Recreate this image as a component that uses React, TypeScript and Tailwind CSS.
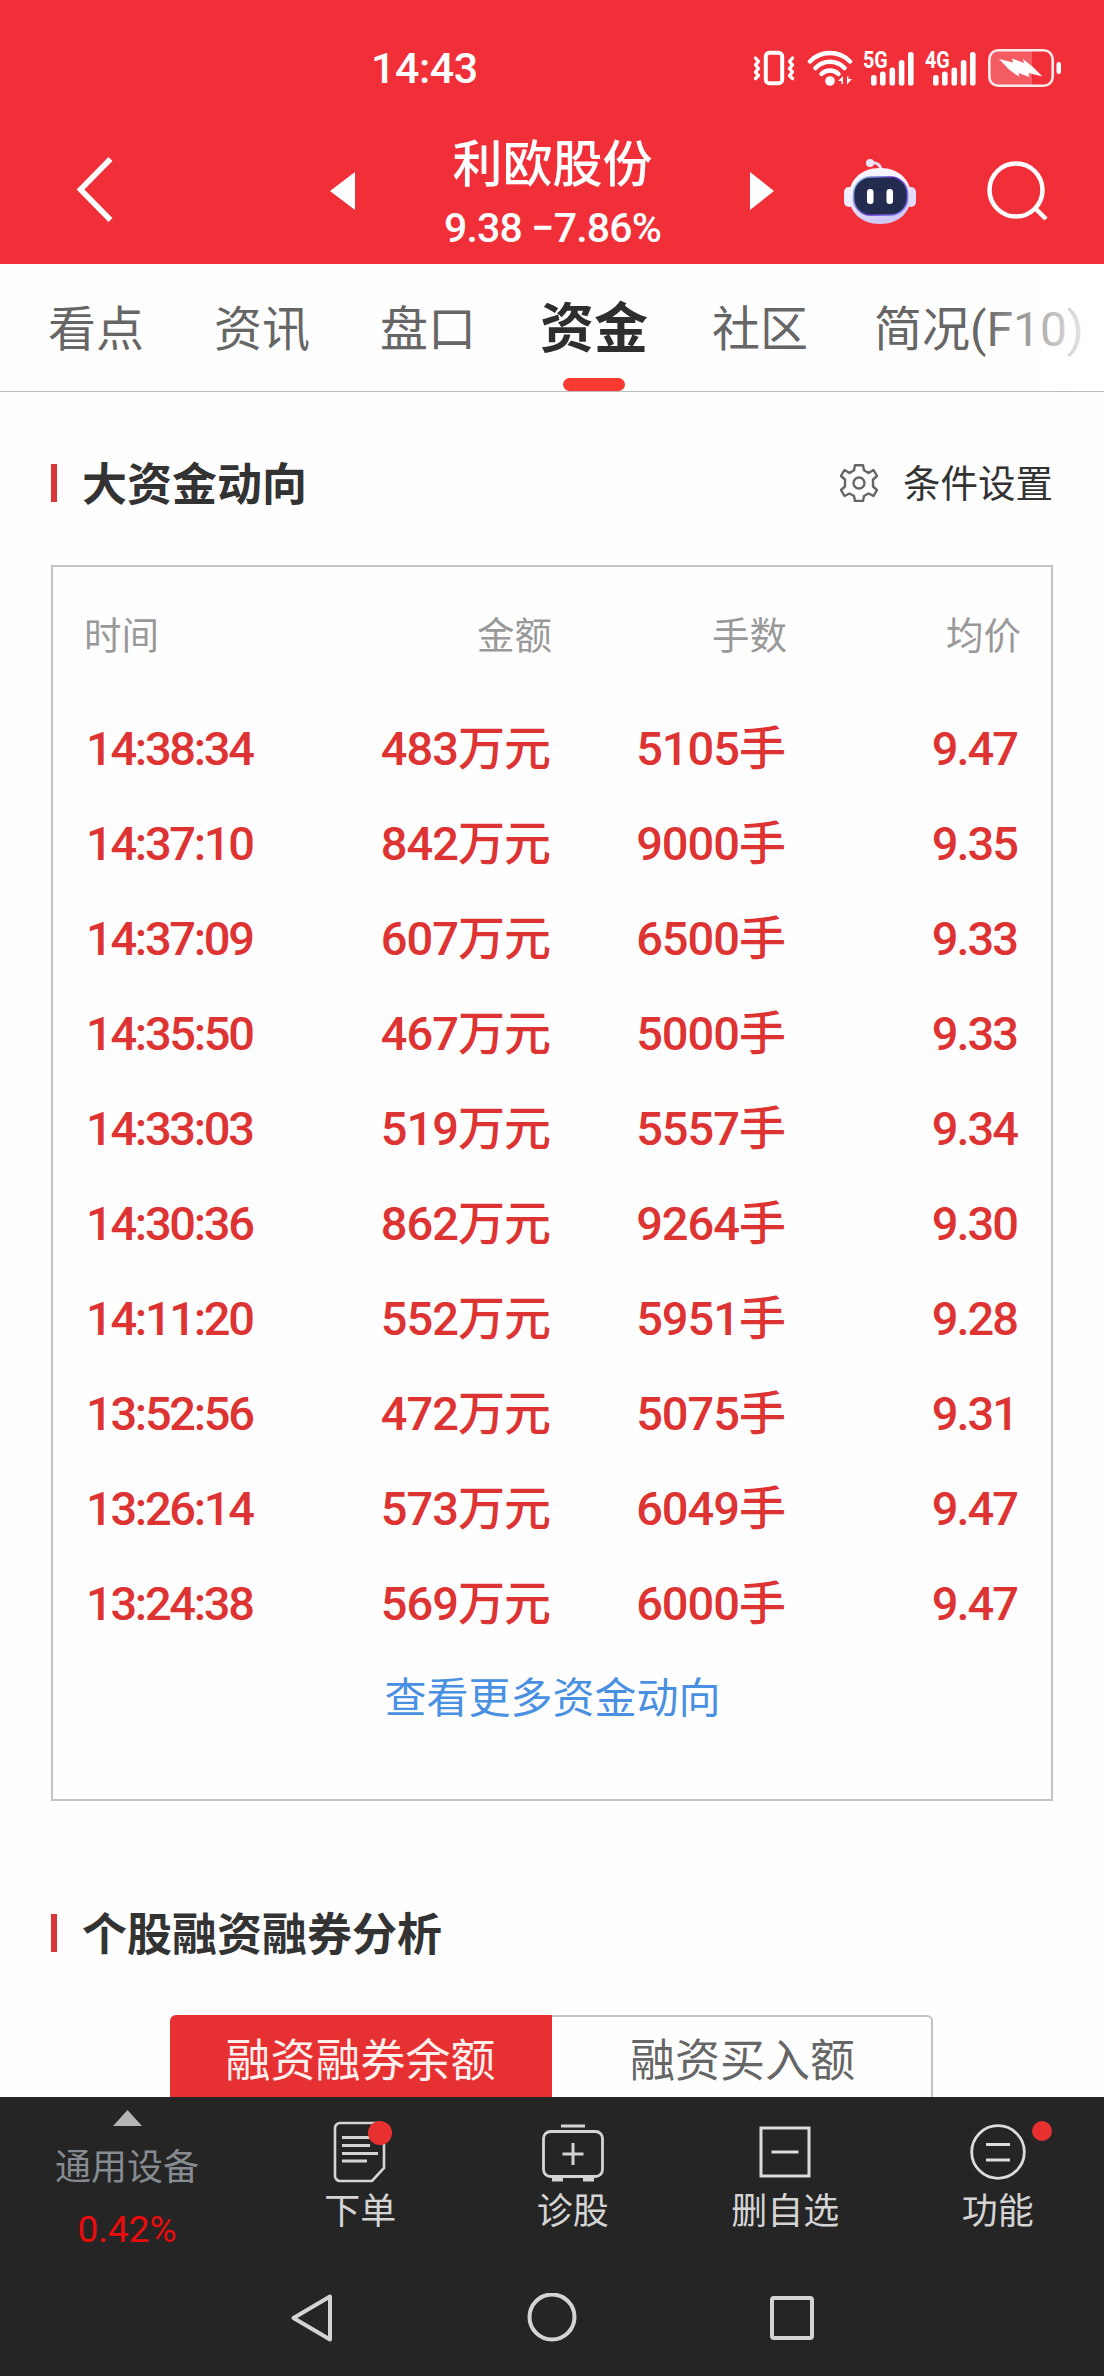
import React from "react";

const tabs = ["看点", "资讯", "盘口", "资金", "社区"];

const trades = [
  { time: "14:38:34", amount: "483万元", lots: "5105手", price: "9.47" },
  { time: "14:37:10", amount: "842万元", lots: "9000手", price: "9.35" },
  { time: "14:37:09", amount: "607万元", lots: "6500手", price: "9.33" },
  { time: "14:35:50", amount: "467万元", lots: "5000手", price: "9.33" },
  { time: "14:33:03", amount: "519万元", lots: "5557手", price: "9.34" },
  { time: "14:30:36", amount: "862万元", lots: "9264手", price: "9.30" },
  { time: "14:11:20", amount: "552万元", lots: "5951手", price: "9.28" },
  { time: "13:52:56", amount: "472万元", lots: "5075手", price: "9.31" },
  { time: "13:26:14", amount: "573万元", lots: "6049手", price: "9.47" },
  { time: "13:24:38", amount: "569万元", lots: "6000手", price: "9.47" },
];

const VibrateIcon = () => (
  <svg width="42" height="36" viewBox="0 0 42 36" fill="none" stroke="white" strokeWidth="4" strokeLinecap="round" strokeLinejoin="round">
    <rect x="12.8" y="2.8" width="16.4" height="30.4" rx="3.5" />
    <path d="M2.5 8l3 3.5-3 3.5 3 3.5-3 3.5 3 3.5-3 3" strokeWidth="3.4" />
    <path d="M39.5 8l-3 3.5 3 3.5-3 3.5 3 3.5-3 3.5 3 3" strokeWidth="3.4" />
  </svg>
);

const WifiIcon = () => (
  <svg width="46" height="36" viewBox="0 0 46 36" fill="none" stroke="white" strokeWidth="4.5" strokeLinecap="round">
    <path d="M3 11.5a28 28 0 0 1 40 0" />
    <path d="M8.5 18a20 20 0 0 1 29 0" />
    <path d="M14.5 24a12 12 0 0 1 17 0" />
    <circle cx="23" cy="31" r="4.8" fill="white" stroke="none" />
    <path d="M31 31l5-5v8h-1.5v-3zM45 29l-5 5.5v-8h1.5V29z" fill="white" stroke="none" />
  </svg>
);

const SignalIcon = ({ label }: { label: string }) => (
  <div className="relative h-9 w-[52px]">
    <span className="absolute left-0 top-0 origin-left scale-x-[0.82] text-[24px] leading-[20px] font-bold">
      {label}
    </span>
    <svg className="absolute right-0 top-0" width="45" height="36" viewBox="0 0 45 36" fill="white">
      <rect x="1" y="25" width="5.6" height="10.5" rx="2.6" />
      <rect x="10" y="21.5" width="5.6" height="14" rx="2.6" />
      <rect x="19.5" y="17.5" width="5.6" height="18" rx="2.6" />
      <rect x="28.8" y="10" width="5.6" height="25.5" rx="2.6" />
      <rect x="38" y="2" width="5.6" height="33.5" rx="2.6" />
    </svg>
  </div>
);

const BatteryIcon = () => (
  <svg width="74" height="38" viewBox="0 0 74 38" fill="none">
    <path d="M11 2h33v34H11a9 9 0 0 1-9-9V11a9 9 0 0 1 9-9z" fill="white" fillOpacity="0.22" />
    <rect x="1.3" y="1.3" width="63.4" height="35.4" rx="9" stroke="white" strokeOpacity="0.9" strokeWidth="2.6" />
    <rect x="68.5" y="13" width="4.5" height="12" rx="2.2" fill="white" />
    <path d="M11 10l14 3.500-1-4 12 4.500-1-4 10 8 9.500 9.500-14-3.500 1 4-11-4 1 4-10-7z" fill="white" />
  </svg>
);

const RobotIcon = () => (
  <svg width="74" height="70" viewBox="0 0 74 70" fill="none">
    <defs>
      <linearGradient id="shell" x1="0" y1="0" x2="0.3" y2="1">
        <stop offset="0.4" stopColor="#f8f5fe" />
        <stop offset="1" stopColor="#d0c9f5" />
      </linearGradient>
      <linearGradient id="rim" x1="0" y1="0" x2="1" y2="0.5">
        <stop offset="0" stopColor="#9fe0f5" />
        <stop offset="0.6" stopColor="#5a2bc0" />
        <stop offset="1" stopColor="#7b6df0" />
      </linearGradient>
    </defs>
    <path d="M38 15c0-6-4-9-10-8" stroke="#e4dcf8" strokeWidth="3" />
    <circle cx="27" cy="7" r="4" fill="#ebe6fa" />
    <rect x="1" y="31" width="10" height="20" rx="5" fill="#f0edfc" />
    <rect x="63" y="31" width="10" height="20" rx="5" fill="#e2dcfa" />
    <path d="M37 12c20 0 31 13 31 28S57 68 37 68 6 55 6 40s11-28 31-28z" fill="url(#shell)" />
    <rect x="10.500" y="21" width="54" height="38" rx="17" fill="#232b4e" stroke="url(#rim)" strokeWidth="1.600" />
    <rect x="24" y="33" width="6.500" height="15" rx="3" fill="white" />
    <rect x="43.500" y="33" width="6.500" height="15" rx="3" fill="white" />
  </svg>
);

const GearIcon = () => (
  <svg width="38" height="38" viewBox="0 0 38 38" fill="none" stroke="#666" strokeWidth="2.4" strokeLinejoin="round">
    <path d="M15 1.200h8l1 5 4.500 2.800 5-3 3.500 6-4 3.500v7l4 3.500-3.500 6-5-2.500-4.500 2.500-1 5h-8l-1-5-4.500-2.500-5 2.500-3.500-6 4-3.500v-7l-4-3.500 3.500-6 5 3 4.500-2.800z" />
    <circle cx="19" cy="19" r="5.500" />
  </svg>
);

const OrderIcon = () => (
  <svg width="54" height="62" viewBox="0 0 54 62" fill="none" stroke="#d4d4d4" strokeWidth="2.600">
    <path d="M7 2h39a5 5 0 0 1 5 5v40L39 60H7a5 5 0 0 1-5-5V7a5 5 0 0 1 5-5z" />
    <path d="M9 16.500h28M9 24.500h28M9 32.500h36M9 40h25" strokeWidth="3" />
  </svg>
);

const DiagnoseIcon = () => (
  <svg width="62" height="62" viewBox="0 0 62 62" fill="none" stroke="#d4d4d4" strokeWidth="2.800">
    <rect x="1.500" y="10.500" width="59" height="45" rx="7" />
    <path d="M19 5h24M20.500 33h21M31 22v22" strokeWidth="3" />
    <path d="M10 58.500h11M41 58.500h11" strokeWidth="4" />
  </svg>
);

const RemoveIcon = () => (
  <svg width="52" height="62" viewBox="0 0 52 62" fill="none" stroke="#dcdcdc" strokeWidth="3">
    <rect x="2" y="7" width="48" height="48" />
    <path d="M12.500 31h27" />
  </svg>
);

const MenuIcon = () => (
  <svg width="56" height="62" viewBox="0 0 56 62" fill="none" stroke="#dcdcdc" strokeWidth="2.800">
    <circle cx="28" cy="31" r="26.300" />
    <path d="M16 23.500h24M16 39h24" strokeWidth="3.200" />
  </svg>
);

const actions = [
  { label: "下单", icon: OrderIcon, badge: "right-[-5px] top-0 size-6" },
  { label: "诊股", icon: DiagnoseIcon, badge: "" },
  { label: "删自选", icon: RemoveIcon, badge: "" },
  { label: "功能", icon: MenuIcon, badge: "right-[-26px] top-0 size-5" },
];

const SectionTitle = ({ children }: { children: React.ReactNode }) => (
  <div className="flex items-center">
    <span className="h-[38px] w-1.5 bg-[#d93737]" />
    <h2 className="ml-[25px] pt-[5px] text-[45px] leading-[49px] font-bold text-[#333]">{children}</h2>
  </div>
);

const App = () => {
  return (
    <div className="flex h-[2376px] w-[1104px] flex-col overflow-hidden bg-[#fefefe] font-['Roboto','Noto_Sans_CJK_SC',sans-serif]">
      <header className="h-[264px] shrink-0 bg-[#f12f38] text-white">
        {/* Status bar */}
        <div className="flex h-[136px] items-center pl-[371px]">
          <span className="w-[382px] text-[43px] leading-none font-medium tracking-[-0.5px]">14:43</span>
          <VibrateIcon />
          <div className="ml-[12px]"><WifiIcon /></div>
          <div className="ml-[10px]"><SignalIcon label="5G" /></div>
          <div className="ml-[10px]"><SignalIcon label="4G" /></div>
          <div className="ml-[11px]"><BatteryIcon /></div>
        </div>

        {/* Stock title */}
        <div className="flex h-[110px] items-center pl-[76px]">
          <svg width="38" height="68" viewBox="0 0 38 68" fill="none" stroke="white" strokeWidth="5.500">
            <path d="M34.500 2L4.500 32.500l30 30.500" />
          </svg>
          <svg className="ml-[216px]" width="25" height="38" viewBox="0 0 25 38" fill="white">
            <path d="M25 0v38L0 19z" />
          </svg>
          <div className="flex w-[395px] flex-col items-center">
            <h1 className="pt-[5px] text-[50px] leading-[60px] font-medium">利欧股份</h1>
            <p className="mt-[9px] text-[41px] leading-[48px] font-medium tracking-[-0.8px]">9.38 −7.86%</p>
          </div>
          <svg width="24" height="38" viewBox="0 0 24 38" fill="white">
            <path d="M0 0l24 19L0 38z" />
          </svg>
          <div className="ml-[69px]"><RobotIcon /></div>
          <svg className="ml-[70px]" width="62" height="62" viewBox="0 0 62 62" fill="none" stroke="white" strokeWidth="4.500">
            <circle cx="29" cy="30" r="26.500" />
            <path d="M48 48l11 11" />
          </svg>
        </div>
      </header>

      {/* Tabs */}
      <nav className="relative flex h-32 shrink-0 items-center border-b border-[#bbb] pl-[13px] text-[48px] text-[#666]">
        {tabs.map((tab) =>
          tab === "资金" ? (
            <div key={tab} className="relative flex h-full w-[166px] items-center justify-center pt-[4px] text-[54px] font-bold text-[#2e2e2e]">
              {tab}
              <span className="absolute bottom-0 left-[52px] h-[13px] w-[62px] rounded-full bg-[#fb3a32]" />
            </div>
          ) : (
            <div key={tab} className="w-[166px] pt-[4px] text-center">{tab}</div>
          )
        )}
        <div className="ml-[31px] pt-[4px] whitespace-nowrap">简况(F10)</div>
        <div className="absolute right-0 top-0 h-full w-[122px] bg-linear-to-r from-transparent to-white" />
      </nav>

      <main className="min-h-0 flex-1 overflow-hidden px-[51px]">
        <div className="mt-[64px] flex items-center justify-between">
          <SectionTitle>大资金动向</SectionTitle>
          <div className="flex items-center text-[37.500px] leading-[54px] text-[#333]">
            <GearIcon />
            <span className="ml-[25px] pt-[3px] leading-[51px]">条件设置</span>
          </div>
        </div>

        {/* Trades table */}
        <div className="mt-[55px] flex h-[1236px] flex-col border-2 border-[#c4c4c4] pl-[31px] pr-[30px]">
          <div className="grid h-[135px] grid-cols-[200px_268px_235px_1fr] items-center pt-[4px] text-right text-[37.500px] text-[#999]">
            <span className="text-left">时间</span>
            <span>金额</span>
            <span>手数</span>
            <span>均价</span>
          </div>
          {trades.map((trade) => (
            <div
              key={trade.time}
              className="grid h-[95px] grid-cols-[200px_268px_235px_1fr] items-center pb-[3px] text-right text-[47px] leading-none font-medium tracking-[-1px] text-[#dd3333]"
            >
              <span className="pl-[2px] text-left tracking-[-2.3px]">{trade.time}</span>
              <span className="pr-[2px]">{trade.amount}</span>
              <span className="pr-[2px]">{trade.lots}</span>
              <span className="pr-[4px] tracking-[-2px]">{trade.price}</span>
            </div>
          ))}
          <a className="mt-[22px] text-center text-[42px] leading-[50px] text-[#4a90e2]">查看更多资金动向</a>
        </div>

        <div className="mt-[105px]">
          <SectionTitle>个股融资融券分析</SectionTitle>
        </div>
        <div className="mx-auto mt-[55px] flex h-[100px] w-[763px] translate-x-[-1px] text-[45px] leading-[93px]">
          <div className="w-[382px] rounded-l-md bg-[#e73031] text-center text-[#fff0ee]">融资融券余额</div>
          <div className="flex-1 rounded-r-md border-2 border-l-0 border-[#c4c4c4] pl-[3px] text-center leading-[89px] text-[#666]">融资买入额</div>
        </div>
      </main>

      <footer className="h-[279px] shrink-0 bg-[#252525]">
        <div className="flex h-[162px]">
          <div className="flex w-[254px] flex-col items-center pt-[13px]">
            <svg width="29" height="16" viewBox="0 0 29 16" fill="#b4b4b4">
              <path d="M14.500 0L29 16H0z" />
            </svg>
            <span className="mt-[20px] text-[36px] leading-[44px] text-[#858b90]">通用设备</span>
            <span className="mt-[18px] text-[37px] leading-[44px] text-[#ea0c0c]">0.42%</span>
          </div>
          <div className="grid flex-1 grid-cols-4 pt-6 text-[36px] leading-[44px] text-[#d4d4d4]">
            {actions.map((action) => (
              <div key={action.label} className="flex flex-col items-center">
                <div className="relative">
                  <action.icon />
                  {action.badge && <span className={`absolute rounded-full bg-[#e83030] ${action.badge}`} />}
                </div>
                <span className="mt-[7px]">{action.label}</span>
              </div>
            ))}
          </div>
        </div>

        {/* System navigation */}
        <div className="flex items-center pl-[290px] pt-[34px]">
          <svg width="44" height="50" viewBox="0 0 44 50" fill="none" stroke="#d4d4d4" strokeWidth="4" strokeLinejoin="round">
            <path d="M40 3.500v43L3.500 25z" />
          </svg>
          <svg className="ml-[193px]" width="50" height="50" viewBox="0 0 50 50" fill="none" stroke="#d4d4d4" strokeWidth="4">
            <circle cx="25" cy="24" r="22.500" />
          </svg>
          <svg className="ml-[192px]" width="46" height="50" viewBox="0 0 46 50" fill="none" stroke="#d4d4d4" strokeWidth="4">
            <rect x="3" y="5" width="40" height="40" rx="2" />
          </svg>
        </div>
      </footer>
    </div>
  );
};

export default App;
